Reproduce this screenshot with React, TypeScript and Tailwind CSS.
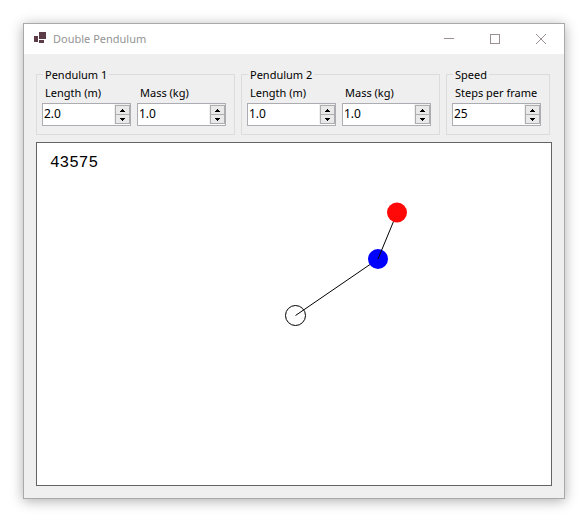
import { useId, useState } from "react";

function Stepper({ label, initial, step, digits }: { label: string; initial: number; step: number; digits: number }) {
  const id = useId();
  const [text, setText] = useState(initial.toFixed(digits));
  const bump = (delta: number) => setText(((Number(text) || 0) + delta).toFixed(digits));
  const arrow =
    "flex h-[10px] w-[15px] items-center justify-center border border-[#adadad] bg-[#e9e9e9] text-black hover:bg-[#e5f1fb]";

  return (
    <div className="flex w-[89px] flex-col gap-[2px]">
      <label htmlFor={id} className="pl-[3px] leading-4 whitespace-nowrap">
        {label}
      </label>
      <div className="flex h-[23px] items-start border border-[#abadb3] bg-white">
        <input
          id={id}
          type="text"
          inputMode="decimal"
          value={text}
          onChange={(e) => setText(e.target.value)}
          className="h-[18px] min-w-0 flex-1 bg-transparent pl-px text-[12px] leading-4 outline-none"
        />
        <div className="flex flex-col -space-y-px bg-[#f0f0f0] pt-px pl-px">
          <button type="button" aria-label={`Increase ${label}`} onClick={() => bump(step)} className={arrow}>
            <svg width="5" height="3" viewBox="0 0 5 3" shapeRendering="crispEdges">
              <path d="M2 0h1v1h1v1h1v1H0V2h1V1h1z" fill="currentColor" />
            </svg>
          </button>
          <button type="button" aria-label={`Decrease ${label}`} onClick={() => bump(-step)} className={arrow}>
            <svg width="5" height="3" viewBox="0 0 5 3" shapeRendering="crispEdges">
              <path d="M0 0h5v1H4v1H3v1H2V2H1V1H0z" fill="currentColor" />
            </svg>
          </button>
        </div>
      </div>
    </div>
  );
}

function Group({ title, children }: { title: string; children: React.ReactNode }) {
  return (
    <fieldset className="border border-[#dcdcdc] pr-2 pb-2 pl-[5px]">
      <legend className="ml-px px-[2px] leading-[15px]">{title}</legend>
      <div className="flex gap-[6px] pt-[3px]">{children}</div>
    </fieldset>
  );
}

function TitleBar() {
  const button = "flex w-[46px] items-center justify-center text-[#9a9094] hover:bg-gray-200";
  return (
    <header className="flex h-[30px] bg-white">
      <div className="flex flex-1 items-center gap-[7px] pl-[10px]">
        <svg width="12" height="14" viewBox="0 0 12 14" fill="#5c3d47" shapeRendering="crispEdges">
          <rect x="0" y="4" width="4" height="6" />
          <rect x="5" y="0" width="7" height="7" />
          <rect x="5" y="8" width="5" height="3" />
        </svg>
        <h1 className="leading-4 text-[#949494]">Double Pendulum</h1>
      </div>
      <button type="button" aria-label="Minimize" className={button}>
        <svg width="10" height="10" viewBox="0 0 10 10" stroke="currentColor" fill="none">
          <path d="M0 4.5h10" />
        </svg>
      </button>
      <button type="button" aria-label="Maximize" className={button}>
        <svg width="10" height="10" viewBox="0 0 10 10" stroke="currentColor" fill="none">
          <rect x="0.5" y="0.5" width="9" height="9" />
        </svg>
      </button>
      <button type="button" aria-label="Close" className={button}>
        <svg width="10" height="10" viewBox="0 0 10 10" stroke="currentColor" fill="none">
          <path d="M0 0l10 10M10 0L0 10" />
        </svg>
      </button>
    </header>
  );
}

export default function App() {
  return (
    <div className="flex min-h-screen bg-white pt-[23px] pr-[19px] pb-5 pl-[23px] font-['Noto_Sans','Open_Sans',sans-serif] text-[11px] text-black">
      <div className="flex min-w-0 flex-1 flex-col border border-[#a9a9a9] bg-[#efefef] shadow-[0_2px_12px_rgba(0,0,0,0.32)]">
        <TitleBar />
        <main className="flex flex-1 flex-col gap-[7px] px-3 pt-[13px] pb-3">
          <form className="flex flex-wrap gap-[6px]" onSubmit={(e) => e.preventDefault()}>
            <Group title="Pendulum 1">
              <Stepper label="Length (m)" initial={2} step={0.1} digits={1} />
              <Stepper label="Mass (kg)" initial={1} step={0.1} digits={1} />
            </Group>
            <Group title="Pendulum 2">
              <Stepper label="Length (m)" initial={1} step={0.1} digits={1} />
              <Stepper label="Mass (kg)" initial={1} step={0.1} digits={1} />
            </Group>
            <Group title="Speed">
              <Stepper label="Steps per frame" initial={25} step={1} digits={0} />
            </Group>
          </form>
          <section className="relative min-h-60 flex-1 border border-[#646464] bg-white">
            <svg className="absolute inset-0 h-full w-full" viewBox="0 0 514 342" fill="none" stroke="#000">
              <circle cx="258.5" cy="172.5" r="10" />
              <path d="M258.5 172.5L341 116" />
              <circle cx="341" cy="116" r="10" fill="#0000ff" stroke="none" />
              <path d="M341 116L360 70" />
              <circle cx="360" cy="69.5" r="10" fill="#ff0808" stroke="none" />
            </svg>
            <output className="relative block px-[13px] pt-[10px] font-['Liberation_Mono',monospace] text-[16px] leading-5">
              43575
            </output>
          </section>
        </main>
      </div>
    </div>
  );
}
